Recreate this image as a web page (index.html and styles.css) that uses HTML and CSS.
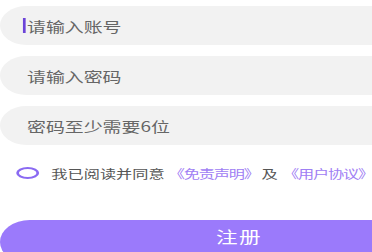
FILE: index.html
```html
<!DOCTYPE html>
<html lang="zh">
<head>
<meta charset="utf-8">
<link rel="stylesheet" href="styles.css">
</head>
<body>
<div class="page">
  <div class="field"><span class="caret"></span><span class="ph">请输入账号</span></div>
  <div class="field"><span class="ph">请输入密码</span></div>
  <div class="field"><span class="ph">密码至少需要6位</span></div>
  <div class="agree">
    <span class="check"></span>
    <span class="txt">我已阅读并同意</span>
    <span class="link">《免责声明》</span>
    <span class="txt and">及</span>
    <span class="link">《用户协议》</span>
  </div>
  <div class="btn">注册</div>
</div>
</body>
</html>
```
FILE: styles.css
```css
html, body {
  margin: 0;
  padding: 0;
  background: #ffffff;
  overflow: hidden;
}
.page {
  width: 354px;
  padding-top: 6px;
  font-family: "Noto Sans CJK SC", "Noto Sans", sans-serif;
  transform: scaleX(1.35);
  transform-origin: 0 0;
}
.field {
  height: 39px;
  border-radius: 20px 0 0 20px;
  background: #f2f2f2;
  margin-bottom: 11px;
  display: flex;
  align-items: center;
  padding-left: 20px;
  position: relative;
}
.ph {
  font-size: 14px;
  color: #666666;
}
.caret {
  position: absolute;
  left: 17px;
  top: 12px;
  width: 1.6px;
  height: 15px;
  background: #6c44d8;
}
.agree {
  display: flex;
  align-items: center;
  height: 24px;
  margin-top: 16px;
  padding-left: 12px;
  white-space: nowrap;
}
.check {
  width: 13px;
  height: 8px;
  border: 2px solid #8a6af2;
  border-radius: 50%;
  margin-right: 9px;
  flex: none;
}
.txt {
  font-size: 12px;
  color: #555555;
}
.and {
  margin: 0 1px 0 2px;
}
.link {
  font-size: 12px;
  letter-spacing: -0.9px;
  color: #9f80f4;
  margin-left: 3px;
}
.btn {
  margin-top: 35px;
  height: 44px;
  border-radius: 22px 0 0 22px;
  background: #9b7afb;
  color: #ffffff;
  font-size: 16px;
  letter-spacing: 1px;
  display: flex;
  align-items: center;
  justify-content: center;
  padding-bottom: 12px;
  box-sizing: border-box;
}
```
